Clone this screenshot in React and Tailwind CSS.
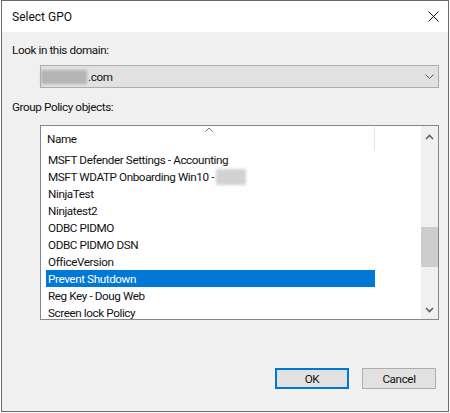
import React from 'react';

const rows = [
  { name: 'MSFT Defender Settings - Accounting' },
  { name: 'MSFT WDATP Onboarding Win10 - ', blur: true },
  { name: 'NinjaTest' },
  { name: 'Ninjatest2' },
  { name: 'ODBC PIDMO' },
  { name: 'ODBC PIDMO DSN' },
  { name: 'OfficeVersion' },
  { name: 'Prevent Shutdown', selected: true },
  { name: 'Reg Key - Doug Web' },
  { name: 'Screen lock Policy' },
];

function Chevron({ up, className }) {
  return (
    <svg width="9" height="6" viewBox="0 0 9 6" className={className}>
      <path
        d={up ? 'M1 5 L4.5 1.5 L8 5' : 'M1 1 L4.5 4.5 L8 1'}
        fill="none"
        stroke="currentColor"
        strokeWidth="1.6"
      />
    </svg>
  );
}

export default function App() {
  return (
    <div className="w-[450px] h-[413px] bg-white overflow-hidden font-['Roboto',sans-serif] text-[11.7px] tracking-[-0.4px] leading-[16px] text-[#111]">
      {/* window */}
      <div className="ml-[1px] w-[448px] h-[412px] border border-[#6b6b6b] flex flex-col bg-[#f0f0f0]">
        {/* title bar */}
        <div className="h-[31px] bg-white flex items-center justify-between pl-[10px] pr-[8px] shrink-0">
          <span className="mt-[1px] text-[12px] tracking-[0px]">Select GPO</span>
          <svg width="11" height="11" viewBox="0 0 11 11" className="mr-[1px]">
            <path d="M0.5 0.5 L10.5 10.5 M10.5 0.5 L0.5 10.5" stroke="#111" strokeWidth="1" />
          </svg>
        </div>

        {/* body */}
        <div className="flex-1 flex flex-col pl-[10px]">
          <div className="mt-[10px]">Look in this domain:</div>

          {/* domain combo */}
          <div className="mt-[7px] ml-[28px] w-[399px] h-[23px] bg-[#e1e1e1] border border-[#adadad] flex items-center justify-between">
            <div className="flex items-center">
              <span className="w-[46px] h-[14px] bg-[#b4b4b4] blur-[1.5px]"></span>
              <span className="ml-[1px]">.com</span>
            </div>
            <svg width="9" height="5" viewBox="0 0 9 5" className="mr-[4px]">
              <path d="M0.5 0.5 L4.5 4.5 L8.5 0.5" fill="none" stroke="#555" strokeWidth="1" />
            </svg>
          </div>

          <div className="mt-[11px]">Group Policy objects:</div>

          {/* list */}
          <div className="mt-[10px] ml-[28px] w-[399px] h-[195px] border border-[#828790] bg-white flex overflow-hidden">
            <div className="flex-1 flex flex-col min-w-0">
              {/* header */}
              <div className="relative h-[25px] shrink-0 flex items-center pl-[6px]">
                <span className="mt-[1px]">Name</span>
                <svg width="8" height="5" viewBox="0 0 8 5" className="absolute left-[164px] top-[1px]">
                  <path d="M0.5 4.5 L4 1 L7.5 4.5" fill="none" stroke="#777" strokeWidth="1" />
                </svg>
                <span className="absolute left-[333px] top-[1px] w-[1px] h-[24px] bg-[#e5e5e5]"></span>
              </div>
              {rows.map((r) => (
                <div
                  key={r.name}
                  className={`ml-[5px] w-[329px] h-[17px] shrink-0 pl-[2px] flex items-center whitespace-nowrap ${r.selected ? 'bg-[#0078d7] text-white' : ''}`}
                >
                  <span className="mt-[1px]">{r.name}</span>
                  {r.blur && <span className="ml-[2px] w-[30px] h-[16px] bg-[#d2d2d2] blur-[1.5px]"></span>}
                </div>
              ))}
            </div>
            {/* scrollbar */}
            <div className="w-[17px] bg-[#f0f0f0] flex flex-col items-center shrink-0">
              <Chevron up className="mt-[8px] text-[#606060]" />
              <div className="mt-[87px] w-full h-[40px] bg-[#cdcdcd]"></div>
              <div className="flex-1"></div>
              <Chevron className="mb-[6px] text-[#606060]" />
            </div>
          </div>

          {/* buttons */}
          <div className="mt-[48px] flex justify-end gap-[13px] pr-[12px]">
            <button className="w-[74px] h-[21px] bg-[#e1e1e1] border-2 border-[#0078d7] flex items-center justify-center">
              OK
            </button>
            <button className="w-[74px] h-[21px] bg-[#e1e1e1] border border-[#adadad] flex items-center justify-center">
              Cancel
            </button>
          </div>
        </div>
      </div>
    </div>
  );
}
